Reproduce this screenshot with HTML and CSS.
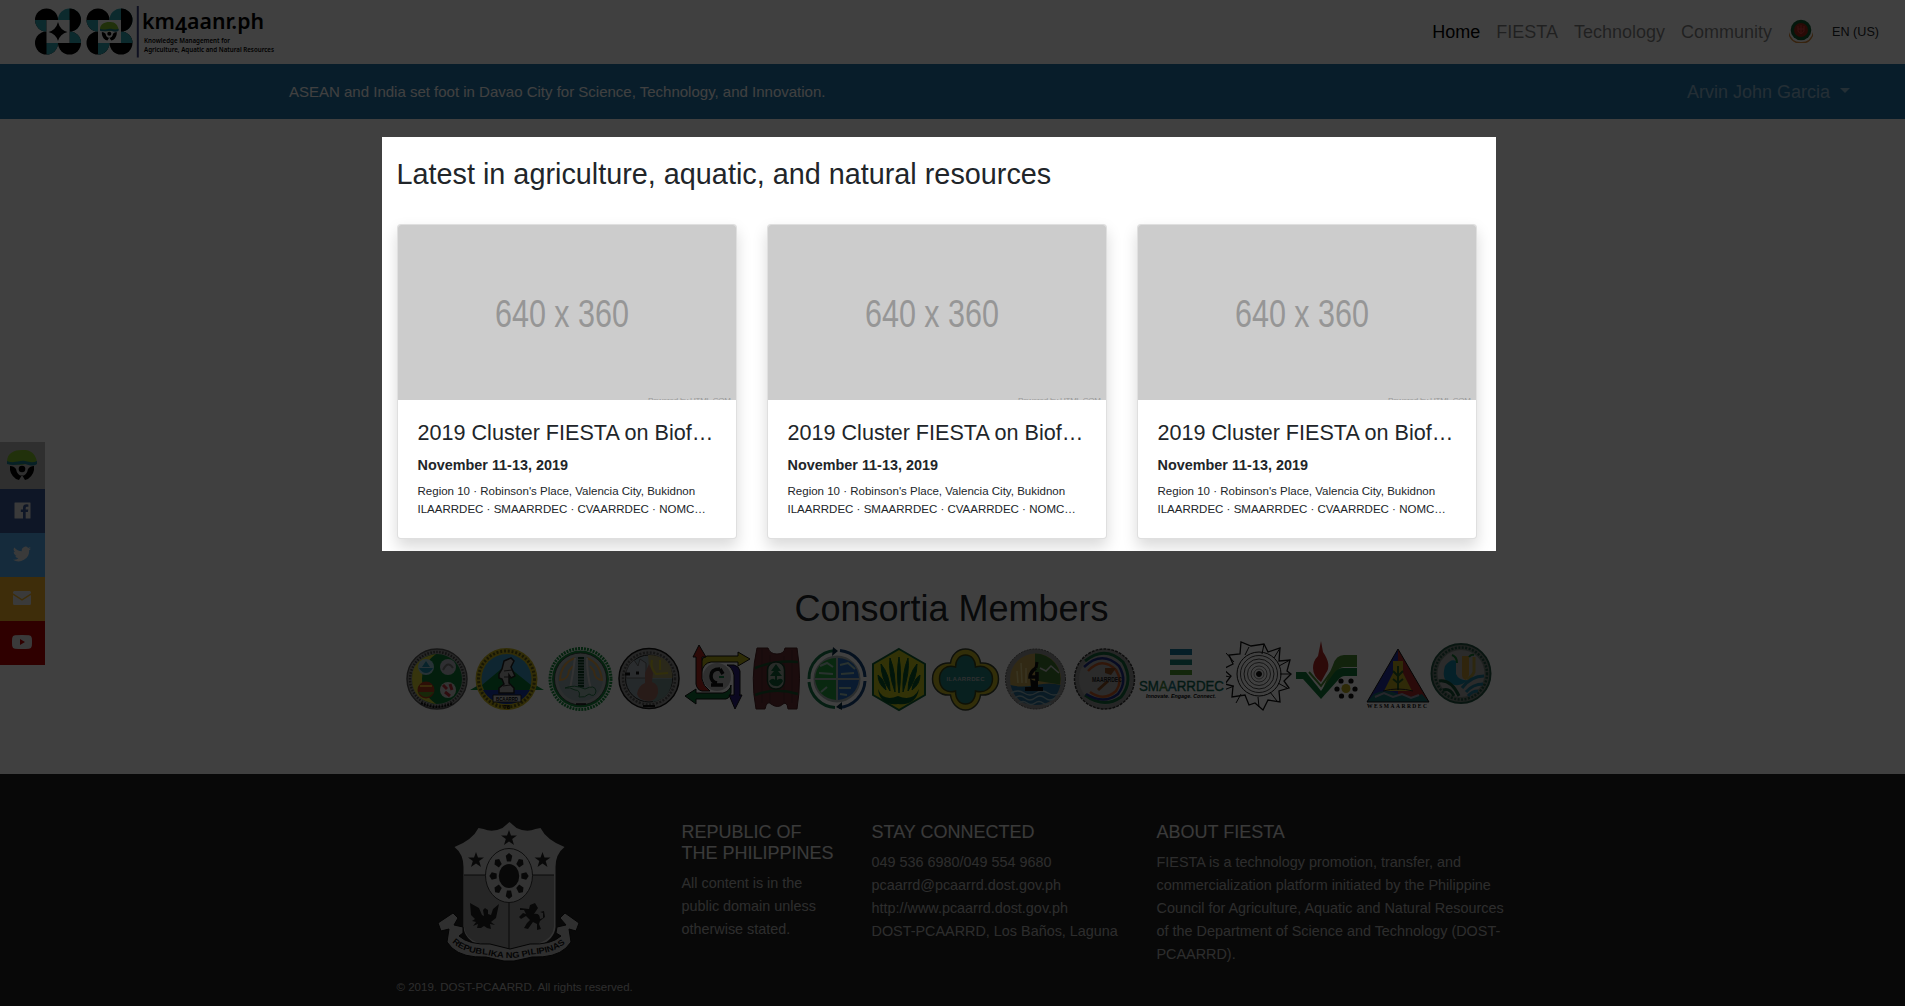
FILE: index.html
```html
<!DOCTYPE html>
<html lang="en">
<head>
<meta charset="utf-8">
<title>km4aanr.ph</title>
<link rel="stylesheet" href="styles.css">
</head>
<body>
<svg class="defs" width="0" height="0" aria-hidden="true">
  <defs>
    <g id="placeholder">
      <rect width="338" height="175" fill="#ccc"/>
      <text x="97" y="102" font-size="38" fill="#969696" textLength="134" lengthAdjust="spacingAndGlyphs">640 x 360</text>
      <text x="250" y="178" font-size="8" fill="#999" textLength="83">Powered by HTML.COM</text>
    </g>
    <g id="face">
      <path d="M0 12C0 3 7 0 15 0c9-1 14 5 15 12-3 4-7 2-11 2-6 2-13 1-19-2z" fill="#84c22c"/>
      <path d="M0 11c7 3 12-1 18 0 4 1 8 2 12 0v3c-4 3-8 1-12 0-5 0-12 2-18 0z" fill="#1f7f92"/>
      <path d="M3 16q4 0 6 3 1 6 6 7 5-1 6-7 2-3 6-3 1 8-6 13l-3 1-3-5-3 5-3-1q-7-5-6-13z" fill="#000"/>
      <circle cx="15" cy="19" r="3.300" fill="#000"/>
    </g>
    <g id="quad">
      <circle cx="12" cy="12" r="11.500" fill="#000"/><circle cx="35" cy="12" r="11.500" fill="#32a7b5"/>
      <circle cx="12" cy="35" r="11.500" fill="#000"/><circle cx="35" cy="35" r="11.500" fill="#000"/>
      <path d="M.500 12H12v11.500A11.500 11.500 0 0 1 .5 12zM12 35h11.500A11.500 11.500 0 0 1 12 46.500zM35 23.500A11.500 11.500 0 0 1 46.500 35H35z" fill="#32a7b5"/>
      <path d="M35 .5A11.500 11.500 0 0 1 46.500 12 11.500 11.500 0 0 1 35 23.500z" fill="#000"/>
      <path d="M12 12h23v23H12z" fill="#fff"/>
    </g>
    <path id="star" d="M0-8 2-2.600h6L3.200.9 5 7 0 3.400-5 7-3.200.9-8-2.600h6z"/>
    <path id="ray" d="M-2.500-15-4-21 0-24 4-21 2.500-15z"/>
  </defs>
</svg>

<header class="topbar">
  <svg class="brand" viewBox="30 0 250 64" width="250" height="64" role="img">
    <use href="#quad" x="34.500" y="8"/>
    <path d="M58 22q2 8 9.500 10Q60 34 58 41q-2-7-9.500-9Q56 30 58 22z" fill="#000"/>
    <use href="#quad" x="86" y="8"/>
    <use href="#face" transform="translate(100 22) scale(.62)"/>
    <path d="M137.800 6v51.500" stroke="#3c4384" stroke-width="2"/>
    <text class="brand-name" x="142" y="29" textLength="122" lengthAdjust="spacingAndGlyphs">km<tspan dy="4">4</tspan><tspan dy="-4">aanr.ph</tspan></text>
    <text class="brand-sub" x="144" y="43" textLength="86" lengthAdjust="spacingAndGlyphs">Knowledge Management for</text>
    <text class="brand-sub" x="144" y="51.500" textLength="130" lengthAdjust="spacingAndGlyphs">Agriculture, Aquatic and Natural Resources</text>
  </svg>
  <nav class="nav">
    <a class="nav-link active">Home</a>
    <a class="nav-link">FIESTA</a>
    <a class="nav-link">Technology</a>
    <a class="nav-link">Community</a>
    <svg class="nav-seal" viewBox="0 0 26 26" width="26" height="26">
      <path d="M1 13q2 10 12 10t12-10v4q-3 6-7 7H8q-5-2-7-7z" fill="#d98a3a"/>
      <circle cx="13" cy="11" r="10.300" fill="#125c30"/><circle cx="13" cy="11" r="7" fill="#a52a18"/>
      <path d="M10 7v5q3 5 6 0V7M13 6v9M10 10h6" fill="none" stroke="#d44" stroke-width="1"/>
    </svg>
    <span class="lang">EN (US)</span>
  </nav>
</header>

<div class="ticker">
  <span>ASEAN and India set foot in Davao City for Science, Technology, and Innovation.</span>
  <span class="user">Arvin John Garcia<i class="caret"></i></span>
</div>

<main>
  <section class="latest">
    <h2>Latest in agriculture, aquatic, and natural resources</h2>
    <div class="cards">
      <article class="card">
        <svg class="card-img" viewBox="0 0 338 175"><use href="#placeholder"/></svg>
        <div class="card-body"><h4>2019 Cluster FIESTA on Biof…</h4><h6>November 11-13, 2019</h6>
          <p>Region 10 · Robinson's Place, Valencia City, Bukidnon</p><p>ILAARRDEC · SMAARRDEC · CVAARRDEC · NOMC…</p></div>
      </article>
      <article class="card">
        <svg class="card-img" viewBox="0 0 338 175"><use href="#placeholder"/></svg>
        <div class="card-body"><h4>2019 Cluster FIESTA on Biof…</h4><h6>November 11-13, 2019</h6>
          <p>Region 10 · Robinson's Place, Valencia City, Bukidnon</p><p>ILAARRDEC · SMAARRDEC · CVAARRDEC · NOMC…</p></div>
      </article>
      <article class="card">
        <svg class="card-img" viewBox="0 0 338 175"><use href="#placeholder"/></svg>
        <div class="card-body"><h4>2019 Cluster FIESTA on Biof…</h4><h6>November 11-13, 2019</h6>
          <p>Region 10 · Robinson's Place, Valencia City, Bukidnon</p><p>ILAARRDEC · SMAARRDEC · CVAARRDEC · NOMC…</p></div>
      </article>
    </div>
  </section>

  <section class="consortia">
    <h1>Consortia Members</h1>
    <div class="logos">
      <svg viewBox="403 640 67 72" width="67" height="72">
        <circle cx="437" cy="679" r="30" fill="#999" stroke="#555" stroke-width="1.500"/>
        <circle cx="437" cy="679" r="27" fill="none" stroke="#444" stroke-width="2.500" stroke-dasharray="1.500 1.500"/>
        <circle cx="437" cy="679" r="25" fill="#0c7a35"/>
        <path d="M436 654q-24 4-24 25t24 25q-14-10-14-25t14-25z" fill="#d8cf35"/>
        <circle cx="426" cy="667" r="8" fill="#9cc6d8"/><path d="M419 668h14q-3 5-7 5t-7-5zM426 661l4 6h-8z" fill="#1d8baa"/>
        <circle cx="448" cy="667" r="8" fill="#b6b9c2"/><path d="M443 670q5-10 10-2" fill="none" stroke="#777" stroke-width="2"/>
        <circle cx="426" cy="690" r="8.500" fill="#b33d1d"/><path d="M418 692h16q-4 5-8 5t-8-5z" fill="#5f9c25"/><path d="M420 686h12" stroke="#e7a72c" stroke-width="2"/>
        <circle cx="448" cy="690" r="8" fill="#ccc"/><path d="m443 685 4 4m3-5 2 6m-7 2 5 4" stroke="#b8303a" stroke-width="3"/>
        <path d="M421 703q16 8 32 0" stroke="#111" stroke-width="2" fill="none" stroke-dasharray="2 1"/>
      </svg>
      <svg viewBox="470 640 74 72" width="74" height="72">
        <path d="m470 690 12-7v7zM544 690l-12-7v7z" fill="#128a3c"/>
        <circle cx="506.500" cy="679" r="31" fill="#c8b51c"/>
        <circle cx="506.500" cy="679" r="28" fill="none" stroke="#5d5715" stroke-width="3" stroke-dasharray="2 1.800"/>
        <circle cx="506.500" cy="679" r="25" fill="#3f98c4"/>
        <path d="m482 685 24-20 25 20q-1 5-3 7h-43z" fill="#087a36"/><path d="M483 690h47q-8 14-23 14-16 0-24-14z" fill="#183aa8"/>
        <path d="m504 661 7-3 3 3-3 6 4 9-4 2-2-3v8l5 5v5h-15v-5l5-4-2-5-3-1v-4l3-5z" fill="#aaa" stroke="#222" stroke-width="1.500"/>
        <path d="m504 671 8-1m-8 7h7m-8 9 7-1" stroke="#333" stroke-width="1.200"/>
        <path d="M493 695h28v7h-28z" fill="#ccc" stroke="#222"/><text x="496" y="701" font-size="5.500" font-weight="bold" textLength="22" lengthAdjust="spacingAndGlyphs">BCAARRD</text>
        <text x="502" y="709" font-size="6" font-weight="bold">'78</text>
      </svg>
      <svg viewBox="544 640 70 72" width="70" height="72">
        <circle cx="580.500" cy="679" r="30.500" fill="none" stroke="#168b3e" stroke-width="3" stroke-dasharray="2 1"/>
        <circle cx="580.500" cy="679" r="28.500" fill="#168b3e"/>
        <circle cx="580.500" cy="679" r="26" fill="#aeb8b8" stroke="#333" stroke-width=".8"/>
        <circle cx="580.500" cy="679" r="22.500" fill="#98aab0"/>
        <path d="M575 658q-14 5-15 22 8 0 9-9l4-5M587 658q13 5 15 22-7 0-8-9l-4-5" stroke="#e3a84e" stroke-width="2" fill="none"/>
        <path d="M570 689q3-15 5-31M591 689q-4-14-4-31" fill="none" stroke="#ccc" stroke-width="2"/>
        <path d="M581 657v31" stroke="#0a3c22" stroke-width="6" stroke-dasharray="2 .8"/>
        <path d="M565 688q9-4 20 1 10-5 11 2-1 7-7 3-4 4-10 3 2-7-4-7-5-3-10-2z" fill="#9ab9ae" stroke="#287648"/>
        <path d="M576 704h10" stroke="#111" stroke-width="1.500"/>
      </svg>
      <svg viewBox="614 640 68 72" width="68" height="72">
        <circle cx="649" cy="678.500" r="30" fill="#999" stroke="#111" stroke-width="1.500"/>
        <circle cx="649" cy="678.500" r="26" fill="none" stroke="#555" stroke-width="2.500" stroke-dasharray="2 1.500"/>
        <circle cx="649" cy="678.500" r="23.500" fill="#93a2aa" stroke="#222"/>
        <path d="M648 655q24 0 24.500 23H650z" fill="#a99f68"/><path d="M652 660q-2 8 4 14l12-1M660 660v10" fill="none" stroke="#c6bc2b" stroke-width="2"/>
        <path d="M649 679h23q-1 20-19 23z" fill="#78958f"/>
        <path d="M626 672q2-8 8-12l4 6 2-7 6 4v15h-20z" fill="#a9afb8" stroke="#666"/><path d="M625 674h5m6-1h3m8 6h4" stroke="#111" stroke-width="3"/>
        <path d="m645 673 4-9 4 9-1 9q7 2 6 11-2 8-9 8-10 0-12-7 1-8 8-11z" fill="#a06b62"/>
        <path d="M643 706h12" stroke="#111" stroke-width="2"/>
      </svg>
      <svg viewBox="682 640 70 72" width="70" height="72">
        <g stroke="#111" stroke-width="1">
          <path d="m685 696 11-7v4h27q7-2 8-8v8q-2 6-5 6h-30v5z" fill="#11713b"/>
          <path d="M727 665h7q5 1 6 6v24h-1 3l-7 14-6-14h5v-20q-2-8-7-10z" fill="#2c237f"/>
          <path d="m750 659-12-7v4h-31q-5 1-6 6v12q2-11 10-12h27v4z" fill="#b7ae19"/>
          <path d="m699 645-6 12h3v27q1 6 6 7h8q-7-5-8-12v-22h4z" fill="#b52a22"/>
        </g>
        <circle cx="717" cy="677" r="14" fill="#bbb"/>
        <path d="M720 669q-9 0-9 7 0 6 6 7m-6 2h12m-3-16 3 5" fill="none" stroke="#111" stroke-width="3.500"/><path d="M719 677h5" stroke="#168143" stroke-width="2"/>
      </svg>
      <svg viewBox="752 640 50 72" width="50" height="72">
        <path d="M757 648h11q2 6 9 6t8-6h12q5 30 0 61h-9q-1-8-5-5-5 5-12 0-4-4-6 5h-9q-6-31 1-61z" fill="#6c3034" stroke="#4a2022"/>
        <path d="M762 649v54m8-48v48m14-47v48m8-54v53" stroke="#55282c"/>
        <path d="M755 668q20-8 43-6M755 695q20-8 43-1" stroke="#19552c" stroke-width="2.500" fill="none"/>
        <rect x="767.500" y="662" width="17" height="27" rx="8" fill="#a0aca1" stroke="#163c27" stroke-width="1.500"/>
        <path d="m776 664 5 7h-3l4 5h-5v4q5-3 6 1-3 6-7 5-5 0-7-5 4-4 6-1v-4h-5l4-5h-3z" fill="#10613a"/>
      </svg>
      <svg viewBox="802 640 67 72" width="67" height="72">
        <path d="M835 650.500A28 28 0 0 0 809 679" fill="none" stroke="#16774a" stroke-width="3"/><path d="M809 682a28 28 0 0 0 26 25.500" fill="none" stroke="#16774a" stroke-width="3"/>
        <path d="M840 650.500A28 28 0 0 1 865 677M865 681a28 28 0 0 1-26 26.500" fill="none" stroke="#16447e" stroke-width="3"/>
        <path d="m833 647 5 4-6 5zM842 702l-6 5 6 3z" fill="#0b2c42"/>
        <circle cx="837" cy="679" r="23.500" fill="#a7b3b4"/>
        <path d="M836 658q-19 1-21 20h21zM815 680h21v20q-18-2-21-20z" fill="#27a140"/><path d="M838 658q19 1 21 20h-21zM838 680h21q-3 18-21 20z" fill="#286bc0"/>
        <path d="m820 666 7-3 6 4m-14 6 14 1m7-9 8-2 7 6m-14 5 13-1m-27 14-6 5m18-4h12m-11 6 7 1" stroke="#a5c6bc" stroke-width="2" fill="none"/>
      </svg>
      <svg viewBox="869 640 61 72" width="61" height="72">
        <path d="m899 649 26 15v31l-26 15-26-15v-31z" fill="#c8c71c" stroke="#116137" stroke-width="2"/>
        <path d="M899 693q-3-20 0-36 3 16 0 36zM895 692q-7-20-5-34 6 15 5 34zM903 692q7-20 5-34-6 15-5 34zM890 691q-9-13-9-27 9 11 9 27zM908 691q9-13 9-27-9 11-9 27zM886 690q-8-6-8-15 7 5 8 15zM912 690q8-6 8-15-7 5-8 15z" fill="#07552b" stroke="#07552b"/>
        <path d="M878 689q5 13 20 7 15 6 21-7-3 17-21 15-18 2-20-15z" fill="#07552b"/>
      </svg>
      <svg viewBox="930 640 71 72" width="71" height="72">
        <path d="M965.500 649c8 0 14 6 15 14 10-1 18 6 18 16s-8 17-18 16c-1 8-7 15-15 15s-14-7-15-15c-10 1-18-6-18-16s8-17 18-16c1-8 7-14 15-14z" fill="#c8b724" stroke="#3b4430" stroke-width="1.500"/>
        <path d="M965.500 655c6 0 10 5 10 12 9-3 17 3 17 12s-8 15-17 12c0 8-4 13-10 13s-10-5-10-13c-9 3-16-3-16-12s7-15 16-12c0-7 4-12 10-12z" fill="#20807e" stroke="#38451b" stroke-width="1.500"/>
        <text x="946.500" y="681" font-size="6" font-weight="bold" fill="#bbb" textLength="38">ILAARRDEC</text>
      </svg>
      <svg viewBox="1001 640 69 72" width="69" height="72">
        <circle cx="1035.500" cy="679" r="30" fill="#999" stroke="#555" stroke-dasharray="2 1"/>
        <circle cx="1035.500" cy="679" r="25.500" fill="#c4a351"/>
        <path d="M1035 653.500a25.500 25.500 0 0 1 25 31l-25-4z" fill="#427a31"/><path d="m1040 668 6 3 5-5 8 7" stroke="#ccc" stroke-width="1.500" fill="none"/>
        <path d="M1010.500 685q10 3 25 0t25 0q-5 20-25 20t-25-20z" fill="#2a6d94"/>
        <path d="M1011 693q7-4 13 0t12 0 12 0 12 0M1015 698q5-4 10 0t10 0 10 0 10 0M1019 703q4-3 8 0t8 0 8 0 8 0" stroke="#95b4bc" stroke-width="1.500" fill="none"/>
        <path d="m1018 683-1-12m5 12-1-20m5 20 0-15" stroke="#dfcf85" stroke-width="1.500"/>
        <path d="M1037 662l-1 6" stroke="#111" stroke-width="3"/><path d="M1036 668q-6 4-6 9h6m1-5v9" fill="none" stroke="#111" stroke-width="3.500"/><path d="M1030 678q2 3 8 3v6h5v4h-18v-4h6z" fill="#111"/>
      </svg>
      <svg viewBox="1070 640 67 72" width="67" height="72">
        <circle cx="1104.500" cy="679" r="30" fill="#999" stroke="#333" stroke-width="1.500" stroke-dasharray="3 1"/>
        <circle cx="1104.500" cy="679" r="25.500" fill="#aaa"/>
        <path d="M1085 661q20-16 38 1 11 19-2 35-17 12-36-2" fill="none" stroke="#146a3e" stroke-width="3"/>
        <path d="M1084 667q18-17 35-1 9 15-1 28-14 11-32 0" fill="none" stroke="#1e2c86" stroke-width="2.500"/>
        <path d="M1088 671q14-15 28-1 7 11 0 21-12 11-26 1" fill="none" stroke="#c35a27" stroke-width="2.500"/>
        <path d="M1105 668h11l-5 7-6-2zM1097 689l10-9 2 2-10 9z" fill="#884d22"/>
        <text x="1092" y="682" font-size="6.500" font-weight="bold" fill="#222" textLength="30" lengthAdjust="spacingAndGlyphs">MAARRDEC</text>
      </svg>
      <svg viewBox="1137 640 89 72" width="89" height="72">
        <path d="M1170 649h22v6h-22z" fill="#16779d"/><path d="M1170 659.500h22v5.500h-22z" fill="#178078"/><path d="M1170 670h22v5h-22z" fill="#4d962c"/>
        <text x="1139" y="691" font-size="15.500" fill="#0c6552" stroke="#0c6552" stroke-width=".4" textLength="85" lengthAdjust="spacingAndGlyphs">SM<tspan fill="#5b962b">A</tspan><tspan fill="#167aa0">A</tspan>RRDEC</text>
        <text x="1146" y="698" font-size="5.500" font-style="italic" font-weight="bold" textLength="70" lengthAdjust="spacingAndGlyphs">Innovate. Engage. Connect.</text>
      </svg>
      <svg viewBox="1226 640 67 72" width="67" height="72" fill="none" stroke="#111">
        <path d="m1264 644 4 8 12-4-1 13 11-1-3 11 4 3-7 7 5 7-10 3 1 11-12-2-5 10-8-7-6 2-4-10-13 2 1-11-8-2 6-8-8-7 10-5-4-9 11-1 1-12 10 4z" stroke-width="1.300"/>
        <path d="m1264 644-2 10m18-6-6 10m16 2-11 6m12 8h-11m-31-27-4 8m-19-2 8 9m-13 13 9 2m-6 13 10-4m2 17 5-9m18 13-1-10m19 4-7-9m17-4-9-5" stroke-width="1"/>
        <circle cx="1259" cy="674" r="22"/><circle cx="1259" cy="674" r="18.500" stroke-width=".8"/><circle cx="1259" cy="674" r="15" stroke-width=".8"/><circle cx="1259" cy="674" r="11.500" stroke-width=".7"/><circle cx="1259" cy="674" r="8" stroke-width=".6"/><circle cx="1259" cy="674" r="5" stroke-width=".5"/><circle cx="1259" cy="674" r="2.500" fill="#111"/>
      </svg>
      <svg viewBox="1293 640 68 72" width="68" height="72">
        <path d="M1316 684l5 9 12-28q3-10 11-10h13v12h-13q-5 0-8 6l-14 24z" fill="#4a8b31"/>
        <path d="M1296 672h10l15 19 13-18q4-5 9-5h14v8h-12q-4 0-7 4l-17 19-18-20h-7z" fill="#117a39"/>
        <path d="m1309 672 12 14 10-14" fill="none" stroke="#4a8b31" stroke-width="2"/>
        <path d="m1321 641 2 11q9 13 3 21l-5 9q-8-6-8-14 0-7 5-12z" fill="#b52827"/>
        <circle cx="1346" cy="688.500" r="4.500" fill="#b8a81c"/><g fill="#111"><circle cx="1341" cy="681" r="2.600"/><circle cx="1351" cy="681" r="2.600"/><circle cx="1337" cy="689" r="2.600"/><circle cx="1355" cy="689" r="2.600"/><circle cx="1341.500" cy="696" r="2.600"/><circle cx="1351" cy="696" r="2.600"/></g>
      </svg>
      <svg viewBox="1361 640 69 72" width="69" height="72">
        <path d="m1398 649-31 53h31z" fill="#2630a0"/><path d="m1398 649 31 53h-31z" fill="#a72828"/>
        <path d="m1367 702 7-8q12-6 24 0t24 0l7 8z" fill="#196f70"/><path d="m1375 697 9-4 9 4 9-3 9 4 8-3" fill="none" stroke="#99a" stroke-width="2"/>
        <path d="M1393 661h10v12l9 18h-28l9-18z" fill="#bda723"/><path d="M1398 690v-24m0 10-5-5m5 5 5-5m-5 12-5-4m5 4 5-4" stroke="#285c25" stroke-width="2"/><path d="M1383 691q15-4 30 0" stroke="#222" fill="none"/>
        <path d="m1398 649-31 53h62z" fill="none" stroke="#111"/>
        <text x="1367" y="708" font-family="Liberation Serif" font-size="5.500" font-weight="bold" textLength="60">WESMAARRDEC</text>
      </svg>
      <svg viewBox="1430 640 64 72" width="64" height="72">
        <circle cx="1461" cy="673.500" r="29.500" fill="#78837c" stroke="#235342" stroke-width="2"/><circle cx="1461" cy="673.500" r="26" fill="none" stroke="#235342" stroke-width="2.500" stroke-dasharray="2 1.500"/>
        <circle cx="1461" cy="673.500" r="23.500" fill="#aaa"/>
        <path d="M1445 666q6-8 11-5v13q3 7 12 6-6 6-13 5-15-2-10-19z" fill="#1785a5"/><path d="M1462 656h7v19l-3 5q-4-1-4-5z" fill="#c09336"/><path d="M1474 657v15q-2 5-7 7" stroke="#b29b3c" stroke-width="3" fill="none"/><path d="M1452 655q5 2 5 8m12-6q2-3 5-2" stroke="#173" fill="none" stroke-width="2"/>
        <path d="M1439 681q12-2 20 15M1443 690q7-2 11 6" stroke="#164f37" stroke-width="3" fill="none"/><path d="M1484 676q-13 0-22 12M1483 684q-10 0-17 8M1478 691q-6 0-10 5" stroke="#207b99" stroke-width="3" fill="none"/>
      </svg>
    </div>
  </section>
</main>

<footer class="footer">
  <div class="footer-inner">
    <div class="col-seal">
      <svg class="seal" viewBox="438 820 142 144" width="142" height="144">
        <path d="m509.500 822 7 6q10 5 19 1l5-1q6 12 24 19-9 7-9 20v60q-1 12-15 18-20 3-31 12-11-9-31-12-14-6-15-18v-60q0-13-9-20 18-7 24-19l5 1q9 4 19-1z" fill="#ccc"/>
        <path d="M464 875h90v52q-1 11-14 16-20 4-31 12-10-8-31-12-13-5-14-16z" fill="#999"/>
        <path d="M464 875h90M509 903v52" stroke="#222"/>
        <ellipse cx="509" cy="875.500" rx="23.500" ry="27" fill="#ccc" stroke="#333"/>
        <g fill="#222"><use href="#star" x="509" y="838"/><use href="#star" x="476" y="860"/><use href="#star" x="542.500" y="860"/>
        <g transform="translate(509 876) scale(.82 .96)"><circle r="12.500"/><use href="#ray"/><use href="#ray" transform="rotate(45)"/><use href="#ray" transform="rotate(90)"/><use href="#ray" transform="rotate(135)"/><use href="#ray" transform="rotate(180)"/><use href="#ray" transform="rotate(225)"/><use href="#ray" transform="rotate(270)"/><use href="#ray" transform="rotate(315)"/></g>
        <path d="m470 903 9 5 3 7 2 1-1-6 2-2 3 2v4l3 1 2-6 6-5-3 14-5 4 4 3-5-1 1 5-4-1-3-2-3 2h-4l1-4-5 2 3-4-4-1 3-2-4-4z"/>
        <path d="m520 908 9 1 1-4 5-2 3 5-4 6q6-1 6 5l3-1v-5l-3-1 4-1 1 6-5 4-1 3 2 5-4 1v-6l-4-2-5 7-4-1 3-5 3-3-4-4-5 3-2-2 4-4 3 1-2-4h-4z"/></g>
        <path d="m453 913-15 10 3 8 8-2-2 13 5 6q11 10 34 9l18 4h10l18-4q23 1 34-9l5-6-2-13 7 2 3-8-14-10-5 5 6 7-9 2-1 6 5 3q-10 9-31 8l-20 5-20-5q-21 1-31-8l4-3v-6l-9-2 4-7z" fill="#bbb" stroke="#111"/>
        <path id="ribbon" d="M451.500 941.500Q462 953 486 954.500 509 961.500 532 954.500 556 953 567 941.500" fill="none"/>
        <text font-size="8.300" font-weight="bold" fill="#111"><textPath href="#ribbon" startOffset="1" textLength="119" lengthAdjust="spacingAndGlyphs">REPUBLIKA NG PILIPINAS</textPath></text>
      </svg>
      <small>© 2019. DOST-PCAARRD. All rights reserved.</small>
    </div>
    <div class="col-republic"><h5>REPUBLIC OF<br>THE PHILIPPINES</h5><p>All content is in the<br>public domain unless<br>otherwise stated.</p></div>
    <div class="col-contact"><h5>STAY CONNECTED</h5><p>049 536 6980/049 554 9680<br>pcaarrd@pcaarrd.dost.gov.ph<br>http://www.pcaarrd.dost.gov.ph<br>DOST-PCAARRD, Los Baños, Laguna</p></div>
    <div class="col-about"><h5>ABOUT FIESTA</h5><p>FIESTA is a technology promotion, transfer, and<br>commercialization platform initiated by the Philippine<br>Council for Agriculture, Aquatic and Natural Resources<br>of the Department of Science and Technology (DOST-<br>PCAARRD).</p></div>
  </div>
</footer>

<aside class="share">
  <a class="share-site"><svg viewBox="0 0 30 30" width="30" height="30"><use href="#face"/></svg></a>
  <a class="share-fb"><svg viewBox="0 0 17 17" width="17" height="17"><path d="M1 .5h15q.5 0 .5.5v15q0 .5-.5.500h-4.300V10h2.200l.4-2.600h-2.600V6q0-1.300 1.300-1.300h1.400V2.400q-5.400-.9-5.400 3.300v1.700H6.800V10H9v6.500H1q-.5 0-.5-.5V1Q.5.500 1 .5z"/></svg></a>
  <a class="share-tw"><svg viewBox="0 0 24 24" width="18" height="18"><path d="M24 4.600a10 10 0 0 1-2.800.8 5 5 0 0 0 2.100-2.700 10 10 0 0 1-3.100 1.200 4.900 4.900 0 0 0-8.400 4.500A14 14 0 0 1 1.700 3.200a4.900 4.900 0 0 0 1.500 6.500 5 5 0 0 1-2.200-.6 4.900 4.900 0 0 0 3.900 4.900 5 5 0 0 1-2.200.1 4.900 4.900 0 0 0 4.600 3.400A9.900 9.900 0 0 1 0 19.500 14 14 0 0 0 21.500 7.100 10 10 0 0 0 24 4.600z"/></svg></a>
  <a class="share-mail"><svg viewBox="0 0 18 14" width="18" height="14"><path d="M1.500 0h15q1.500 0 1.500 1.500v.8L9 8 0 2.300v-.8Q0 0 1.500 0zM0 4l9 5.800L18 4v8.500q0 1.500-1.500 1.500h-15Q0 14 0 12.500z"/></svg></a>
  <a class="share-yt"><svg viewBox="0 0 20 14" width="20" height="14"><path fill-rule="evenodd" d="M3 .3Q10-.3 17 .3q2.500.2 2.800 2.700.4 4 0 8-.3 2.500-2.800 2.700-7 .6-14 0Q.5 13.500.2 11q-.4-4 0-8Q.5.500 3 .3zM8 4v6l5-3z"/></svg></a>
</aside>
</body>
</html>
```
FILE: styles.css
```css
* { box-sizing: border-box; }
html { font-size: 14.4px; }
body {
  margin: 0;
  height: 1006px;
  overflow: hidden;
  display: flex;
  flex-direction: column;
  background: #fff;
  color: #212529;
  font-family: "Liberation Sans", Arial, sans-serif;
  line-height: 1.6;
}
h1, h2, h4, h5, h6, p { margin: 0; font-weight: 400; }
h1, h2, h4, h5, h6 { line-height: 1.2; }
svg { display: block; flex: none; }
.defs { position: absolute; }

.topbar {
  display: flex;
  justify-content: space-between;
  height: 64px;
  padding: 0 26px 0 30px;
}
.brand-name { font: 600 22px "Noto Sans", sans-serif; }
.brand-sub { font: 600 6.700px "Noto Sans", sans-serif; }
.nav { display: flex; align-items: center; }
.nav-link { padding: 0 8px; font-size: 18px; color: rgba(0, 0, 0, .5); }
.nav-link.active { color: #000; }
.nav-seal { margin: 0 18px 0 8px; }
.lang { font-size: 12.600px; color: #212529; }

.ticker {
  display: flex;
  justify-content: space-between;
  align-items: center;
  height: 55px;
  padding: 0 55px 0 289px;
  background: #2074a8;
  color: #fff;
  font-size: 15px;
}
.user { display: flex; align-items: center; padding-top: 1px; font-size: 18px; color: rgba(255, 255, 255, .5); }
.caret { margin: -3px 0 0 10px; border: 5.400px solid transparent; border-top-color: currentColor; border-bottom: 0; }

/* Tour highlight: its spread shadow dims everything else on the page */
.latest {
  position: relative;
  z-index: 10;
  width: 1114px;
  height: 414px;
  margin: 18px 0 0 382px;
  padding: 19.500px 15px 0 14.500px;
  overflow: hidden;
  background: #fff;
  box-shadow: 0 0 0 2000px rgba(0, 0, 0, .75);
}
.latest h2 { font-size: 2rem; white-space: nowrap; }
.cards { display: flex; gap: 30px; margin-top: 33px; }
.card {
  flex: none;
  width: 340px;
  height: 315px;
  border: 1px solid rgba(0, 0, 0, .125);
  border-radius: 4px;
  background: #fff;
  box-shadow: 0 .5rem 1rem rgba(0, 0, 0, .15);
}
.card-img { width: 338px; height: 175px; border-radius: 3px 3px 0 0; }
.card-body { padding: 20px; white-space: nowrap; }
.card h4 { font-size: 1.5rem; }
.card h6 { margin: 11.200px 0 7.300px; font-size: 1rem; font-weight: 700; }
.card p { font-size: .8rem; }

.consortia { height: 223px; padding-top: 35.500px; }
.consortia h1 { width: 1903px; font-size: 2.500rem; text-align: center; }
.logos { display: flex; margin: 10px 0 0 403px; }

.footer { flex: 1; background: #222; color: #b4b4b4; }
.footer-inner {
  display: grid;
  grid-template-columns: 285px 190px 285px 1fr;
  margin-left: 396.500px;
  padding-top: 47.500px;
}
.footer h5 { margin-bottom: 7.700px; font-size: 1.250rem; color: #e6e6e6; }
.footer p { white-space: nowrap; }
.seal { margin: -1.500px 0 0 41.500px; }
.footer small { display: block; margin-top: 14px; font-size: .8rem; }

.share {
  position: absolute;
  left: 0;
  top: 442px;
  width: 45px;
}
.share a { display: flex; align-items: center; justify-content: center; height: 44px; padding: 0 1px 1.500px 0; fill: #e8e8e8; }
.share .share-site { height: 47px; background: #bbb; }
.share-fb { background: #3b5998; }
.share-tw { background: #55acee; }
.share-mail { background: #f5b52b; }
.share-yt { background: #b00; }
```
